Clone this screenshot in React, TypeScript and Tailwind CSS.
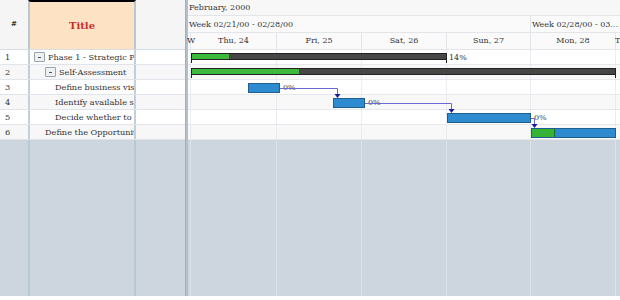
import React from "react";

const rows = [
  { n: 1, text: "Phase 1 - Strategic P", indent: 4, exp: true },
  { n: 2, text: "Self-Assessment", indent: 15, exp: true },
  { n: 3, text: "Define business vis", indent: 25, exp: false },
  { n: 4, text: "Identify available s", indent: 25, exp: false },
  { n: 5, text: "Decide whether to", indent: 25, exp: false },
  { n: 6, text: "Define the Opportunit", indent: 15, exp: false },
];

const days = [
  { label: "W", w: 3 },
  { label: "Thu, 24", w: 86 },
  { label: "Fri, 25", w: 85 },
  { label: "Sat, 26", w: 85 },
  { label: "Sun, 27", w: 84 },
  { label: "Mon, 28", w: 85 },
  { label: "T", w: 4 },
];

function Expander({ left }: { left: number }) {
  return (
    <span
      className="absolute top-[2px] w-[11px] h-[10px] border border-[#9aa4ad] bg-[#eef0f2] rounded-[1px] flex items-center justify-center"
      style={{ left }}
    >
      <span className="w-[3px] h-px bg-[#555]" />
    </span>
  );
}

function Summary({ x, w, g, top, label }: { x: number; w: number; g: number; top: number; label?: string }) {
  return (
    <>
      <div className="absolute h-[7px] bg-[#464646] border border-[#222]" style={{ left: x, top, width: w }}>
        <div className="h-full bg-[#3cba3c]" style={{ width: g }} />
      </div>
      <div className="absolute w-px h-[3px] bg-[#222]" style={{ left: x, top: top + 7 }} />
      <div className="absolute w-px h-[3px] bg-[#222]" style={{ left: x + w - 1, top: top + 7 }} />
      {label && (
        <span className="absolute text-[8px] leading-none text-[#333]" style={{ left: x + w + 2, top: top + 1 }}>
          {label}
        </span>
      )}
    </>
  );
}

function Task({ x, w, top, g = 0, label }: { x: number; w: number; top: number; g?: number; label?: string }) {
  return (
    <>
      <div className="absolute h-[10px] bg-[#2f8bd0] border border-[#1f5f90] overflow-hidden" style={{ left: x, top, width: w }}>
        {g > 0 && <div className="h-full bg-[#36b336] border-r border-[#1c6d1c]" style={{ width: g }} />}
      </div>
      {label && (
        <span className="absolute text-[8px] leading-none text-[#444]" style={{ left: x + w + 3, top: top + 1 }}>
          {label}
        </span>
      )}
    </>
  );
}

export default function App() {
  return (
    <div className="w-[620px] h-[300px] bg-white overflow-hidden" style={{ fontFamily: '"DejaVu Serif", serif' }}>
      <div className="flex h-[296px] bg-[#cdd6df]">
        {/* left grid */}
        <div className="w-[185px] shrink-0 flex flex-col relative">
          <div className="flex h-[50px] bg-[#f5f5f5] border-b border-[#d6dde3]">
            <div className="w-[28px] flex items-center justify-center text-[7px] font-bold text-[#333]">#</div>
            <div className="w-[108px] bg-[#fde3c3] border-t-2 border-t-black border-x-2 border-x-[#b8c6d2] flex items-center justify-center text-[10px] font-bold text-[#c8302c]">
              Title
            </div>
            <div className="flex-1" />
          </div>
          {rows.map((r, i) => (
            <div
              key={r.n}
              className={`flex h-[15px] border-b border-[#dfe5ea] text-[8.2px] text-[#333] ${i % 2 ? "bg-[#f7f7f7]" : "bg-white"}`}
            >
              <div className="w-[28px] pl-[5px] leading-[15px]">{r.n}</div>
              <div className="w-[108px] border-x-2 border-[#c3d0dc] relative whitespace-nowrap overflow-hidden leading-[15px]">
                {r.exp && <Expander left={r.indent} />}
                <span className="absolute" style={{ left: r.exp ? r.indent + 14 : r.indent }}>
                  {r.text}
                </span>
              </div>
              <div className="flex-1" />
            </div>
          ))}
          <div className="flex flex-1">
            <div className="w-[28px]" />
            <div className="w-[108px] border-x-2 border-[#b9c8d5]" />
          </div>
        </div>
        {/* splitter */}
        <div className="w-[3px] shrink-0 bg-[#b3c0cb] border-l border-[#9fb0be]" />
        {/* chart */}
        <div className="w-[432px] shrink-0 flex flex-col relative">
          <div className="h-[16px] bg-[#f7f7f7] border-b border-[#e2e6ea] pl-[1px] text-[8px] leading-[16px] text-[#333]">
            February, 2000
          </div>
          <div className="h-[17px] bg-[#fafafa] border-b border-[#e2e6ea] flex text-[8px] leading-[17px] text-[#333]">
            <div className="w-[343px] pl-[1px] border-r border-[#e2e6ea]">Week 02/21/00 - 02/28/00</div>
            <div className="flex-1 pl-[1px] whitespace-nowrap overflow-hidden">Week 02/28/00 - 03...</div>
          </div>
          <div className="h-[17px] bg-[#fafafa] border-b border-[#e2e6ea] flex text-[8px] leading-[16px] text-[#333]">
            {days.map((d, i) => (
              <div
                key={i}
                className={`shrink-0 whitespace-nowrap ${i < days.length - 1 ? "border-r border-[#e2e6ea]" : ""} ${
                  d.w > 10 ? "text-center" : ""
                }`}
                style={{ width: d.w }}
              >
                {d.w > 10 ? d.label : <span className="relative -left-[1px]">{d.label}</span>}
              </div>
            ))}
          </div>
          <div className="flex-1 relative">
            {rows.map((r, i) => (
              <div
                key={r.n}
                className={`h-[15px] border-b border-[#e6eaee] ${i % 2 ? "bg-[#f8f8f8]" : "bg-white"}`}
              />
            ))}
            <div className="absolute inset-0 flex pointer-events-none">
              {days.map((d, i) => (
                <div
                  key={i}
                  className={`shrink-0 ${i < days.length - 1 ? "border-r border-[#e3e7eb]/70" : ""}`}
                  style={{ width: d.w }}
                />
              ))}
            </div>
            <Summary x={3} w={256} g={37} top={3} label="14%" />
            <Summary x={3} w={425} g={107} top={18} />
            <Task x={60} w={32} top={33} label="0%" />
            <Task x={145} w={32} top={48} label="0%" />
            <Task x={259} w={84} top={63} label="0%" />
            <Task x={343} w={85} top={78} g={23} />
            <svg className="absolute inset-0" width="432" height="246">
              <g stroke="#6a6ad0" strokeWidth="1" fill="none">
                <path d="M92 38.5 H149.5 V45" />
                <path d="M177 53.5 H263.5 V60" />
                <path d="M343 68.5 H346.5 V75" />
              </g>
              <g fill="#1a1aa0">
                <path d="M146.5 44 h6 l-3 4 z" />
                <path d="M260.5 59 h6 l-3 4 z" />
                <path d="M343.5 74 h6 l-3 4 z" />
              </g>
            </svg>
          </div>
        </div>
      </div>
    </div>
  );
}
